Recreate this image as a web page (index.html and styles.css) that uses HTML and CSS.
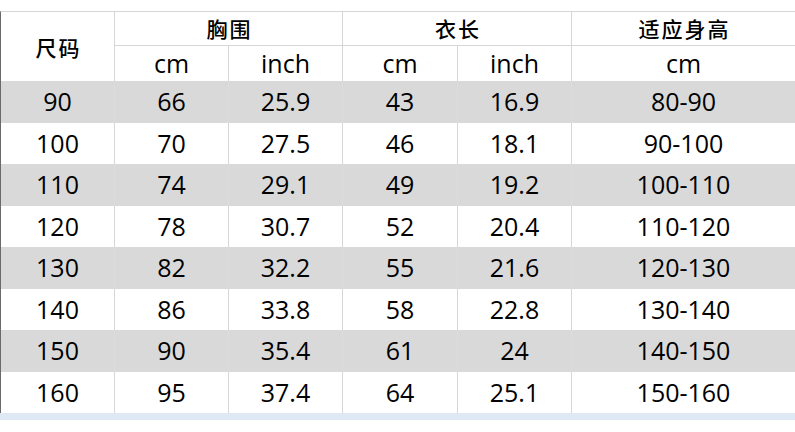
FILE: index.html
```html
<!DOCTYPE html>
<html lang="zh">
<head>
<meta charset="utf-8">
<title>尺码表</title>
<link rel="stylesheet" href="styles.css">
</head>
<body>
<div class="page">
  <div class="top-gap"></div>
  <div class="size-table">
    <div class="cell head cn size-head">尺码</div>
    <div class="cell head cn span2">胸围</div>
    <div class="cell head cn span2">衣长</div>
    <div class="cell head cn last">适应身高</div>

    <div class="cell head unit">cm</div>
    <div class="cell head unit">inch</div>
    <div class="cell head unit">cm</div>
    <div class="cell head unit">inch</div>
    <div class="cell head unit last">cm</div>

    <div class="cell g">90</div><div class="cell g">66</div><div class="cell g">25.9</div><div class="cell g">43</div><div class="cell g">16.9</div><div class="cell g last">80-90</div>
    <div class="cell">100</div><div class="cell">70</div><div class="cell">27.5</div><div class="cell">46</div><div class="cell">18.1</div><div class="cell last">90-100</div>
    <div class="cell g">110</div><div class="cell g">74</div><div class="cell g">29.1</div><div class="cell g">49</div><div class="cell g">19.2</div><div class="cell g last">100-110</div>
    <div class="cell">120</div><div class="cell">78</div><div class="cell">30.7</div><div class="cell">52</div><div class="cell">20.4</div><div class="cell last">110-120</div>
    <div class="cell g">130</div><div class="cell g">82</div><div class="cell g">32.2</div><div class="cell g">55</div><div class="cell g">21.6</div><div class="cell g last">120-130</div>
    <div class="cell">140</div><div class="cell">86</div><div class="cell">33.8</div><div class="cell">58</div><div class="cell">22.8</div><div class="cell last">130-140</div>
    <div class="cell g">150</div><div class="cell g">90</div><div class="cell g">35.4</div><div class="cell g">61</div><div class="cell g">24</div><div class="cell g last">140-150</div>
    <div class="cell">160</div><div class="cell">95</div><div class="cell">37.4</div><div class="cell">64</div><div class="cell">25.1</div><div class="cell last">150-160</div>
  </div>
  <div class="foot-band"></div>
  <div class="foot-rest"></div>
</div>
</body>
</html>
```

FILE: styles.css
```css
html, body {
  margin: 0;
  padding: 0;
  background: #ffffff;
}

.page {
  width: 795px;
  height: 432px;
  overflow: hidden;
  font-family: "Open Sans", "Noto Sans", "Noto Sans CJK SC", sans-serif;
  color: #000000;
}

.top-gap {
  height: 11px;
  background: #ffffff;
}

.size-table {
  display: grid;
  grid-template-columns: 114px 114px 114px 115px 114px 1fr;
  grid-template-rows: 34px 35px repeat(8, 1fr);
  height: 402px;
  border-top: 1px solid #d6d6d6;
  border-left: 1px solid #6a6a6a;
  box-sizing: border-box;
}

.cell {
  display: flex;
  align-items: center;
  justify-content: center;
  border-right: 1px solid #d6d6d6;
  font-size: 25px;
  line-height: 1;
  background: #ffffff;
}

.cell.last {
  border-right: none;
}

.cell.g {
  background: #d9d9d9;
  border-right-color: #dcdcdc;
}

.cell.last.g {
  border-right: none;
}

.head.cn {
  font-family: "Noto Sans CJK SC", sans-serif;
  font-size: 21px;
  font-weight: 500;
  letter-spacing: 2px;
  border-bottom: 1px solid #d6d6d6;
  padding-left: 2px;
}

.size-head {
  grid-row: 1 / span 2;
  border-bottom: none !important;
  padding-top: 2px;
}

.span2 {
  grid-column: span 2;
}

.head.unit {
  font-size: 25px;
}

.foot-band {
  height: 7px;
  background: #dfe9f5;
}

.foot-rest {
  height: 12px;
  background: #ffffff;
}
```
